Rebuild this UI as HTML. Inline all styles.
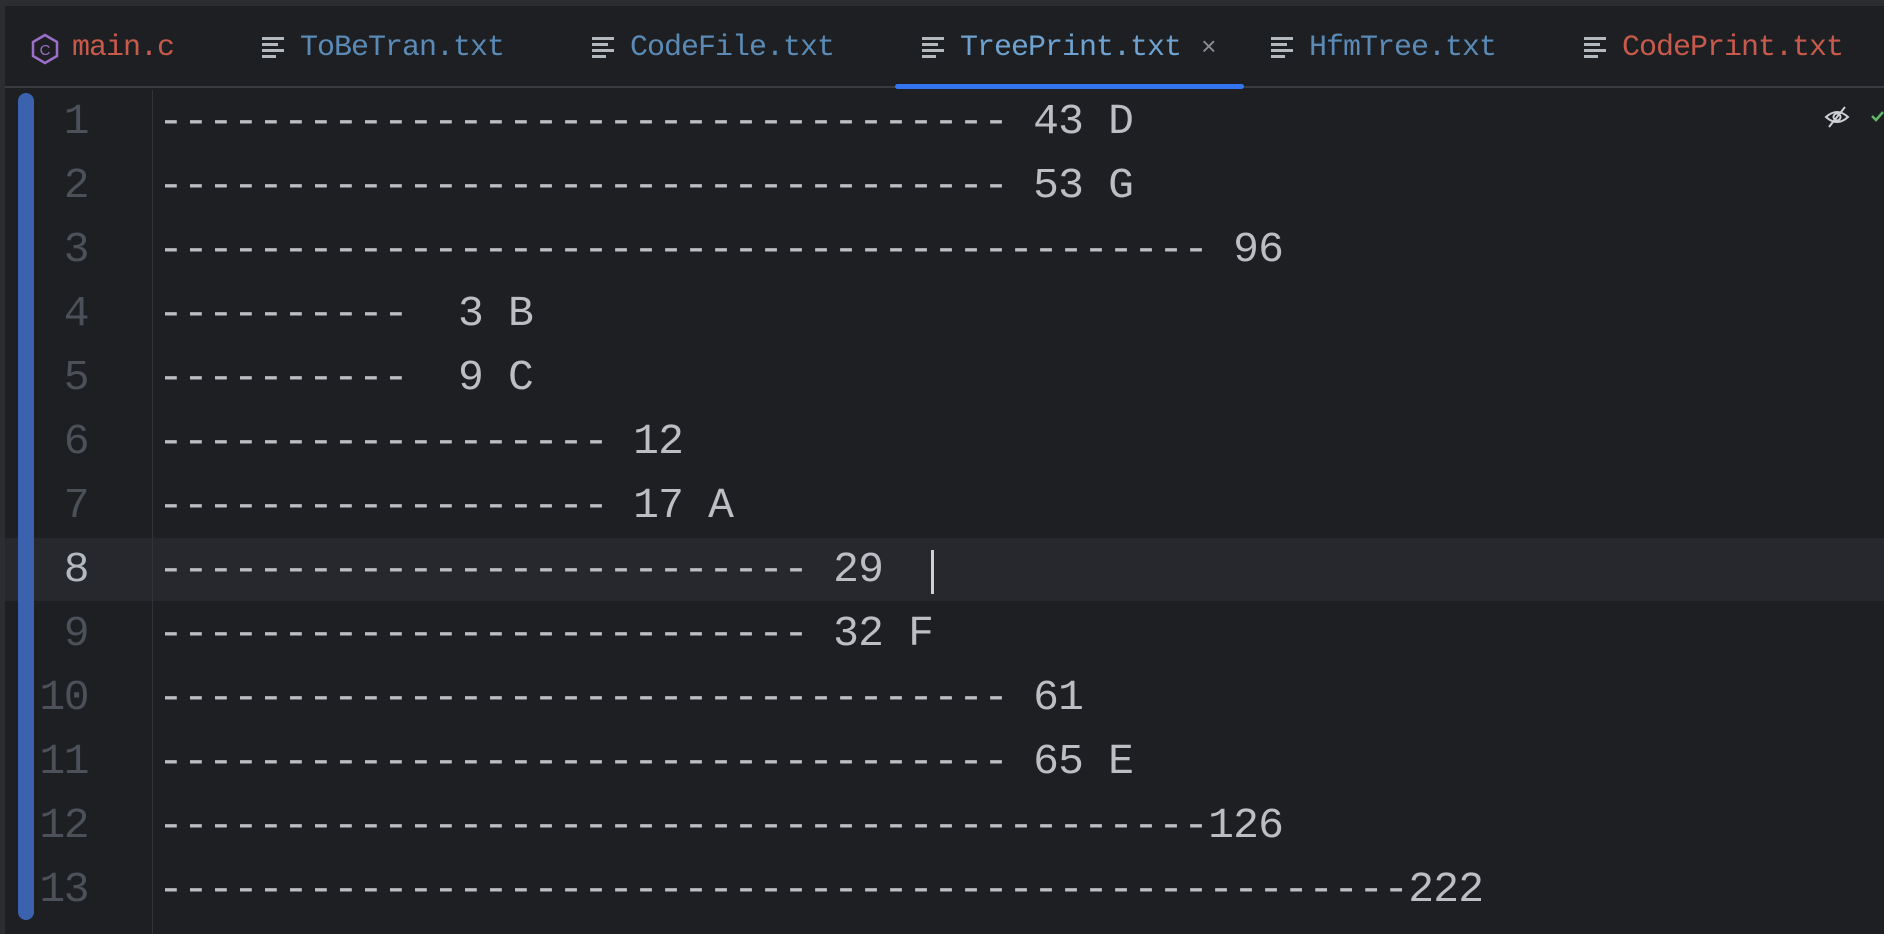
<!DOCTYPE html>
<html><head><meta charset="utf-8"><style>
*{margin:0;padding:0;box-sizing:border-box}
body{width:1884px;height:934px;background:#1e1f22;position:relative;overflow:hidden;font-family:"Liberation Mono",monospace}
.top{position:absolute;left:0;top:0;width:1884px;height:6px;background:#2b2d30}
.leftedge{position:absolute;left:0;top:6px;width:5px;height:928px;background:#2b2d30}
.tabbar{position:absolute;left:5px;top:6px;width:1879px;height:82px;background:#1e1f22;border-bottom:2px solid #393b40}
.tab{position:absolute;top:30px;font-size:30px;letter-spacing:-1px;line-height:36px;white-space:nowrap}
.ic{position:absolute;top:37px;width:24px;height:22px}
.ic i{position:absolute;left:0;height:3px;background:#b4b8bf}
.ul{position:absolute;left:895px;top:84px;width:349px;height:5px;background:#3574f0;border-radius:3px}
.hl{position:absolute;left:5px;top:538px;width:1879px;height:63px;background:#26282e}
.bar{position:absolute;left:18px;top:93px;width:16px;height:827px;background:#3a62ae;border-radius:8px}
.div{position:absolute;left:152px;top:90px;width:1px;height:844px;background:#313338}
.ln{position:absolute;left:30px;width:58px;text-align:right;font-size:43px;letter-spacing:-1.5px;color:#4b5059;line-height:64px}
.tx{position:absolute;left:158px;font-size:43px;letter-spacing:-0.8px;color:#bcbec4;line-height:64px;white-space:pre}
.cur{position:absolute;left:931px;top:550px;width:3px;height:44px;background:#ced0d6}
</style></head><body>
<div class="top"></div><div class="leftedge"></div>
<div class="tabbar"></div>
<svg style="position:absolute;left:30px;top:33px" width="30" height="32" viewBox="0 0 30 32"><polygon points="15,2 27,9 27,23 15,30 3,23 3,9" fill="none" stroke="#9b6fc8" stroke-width="2.5"/><text x="15" y="22" font-size="15" text-anchor="middle" fill="#9b6fc8" font-family="Liberation Sans">C</text></svg>
<div class="tab" style="left:72px;color:#c75a4b">main.c</div>
<div class="ic" style="left:262px"><i style="top:0;width:22px"></i><i style="top:6px;width:16px"></i><i style="top:12px;width:22px"></i><i style="top:18px;width:14px"></i></div>
<div class="tab" style="left:300px;color:#5a8ab5">ToBeTran.txt</div>
<div class="ic" style="left:592px"><i style="top:0;width:22px"></i><i style="top:6px;width:16px"></i><i style="top:12px;width:22px"></i><i style="top:18px;width:14px"></i></div>
<div class="tab" style="left:630px;color:#5a8ab5">CodeFile.txt</div>
<div class="ic" style="left:922px"><i style="top:0;width:22px"></i><i style="top:6px;width:16px"></i><i style="top:12px;width:22px"></i><i style="top:18px;width:14px"></i></div>
<div class="tab" style="left:960px;color:#6ea2d0">TreePrint.txt</div>
<div class="tab" style="left:1201px;color:#8a8d93;font-size:26px">×</div>
<div class="ic" style="left:1271px"><i style="top:0;width:22px"></i><i style="top:6px;width:16px"></i><i style="top:12px;width:22px"></i><i style="top:18px;width:14px"></i></div>
<div class="tab" style="left:1309px;color:#5a8ab5">HfmTree.txt</div>
<div class="ic" style="left:1584px"><i style="top:0;width:22px"></i><i style="top:6px;width:16px"></i><i style="top:12px;width:22px"></i><i style="top:18px;width:14px"></i></div>
<div class="tab" style="left:1622px;color:#c75a4b">CodePrint.txt</div>
<div class="ul"></div>
<div class="hl"></div>
<div class="bar"></div>
<div class="div"></div>
<div class="ln" style="top:90px">1</div>
<div class="ln" style="top:154px">2</div>
<div class="ln" style="top:218px">3</div>
<div class="ln" style="top:282px">4</div>
<div class="ln" style="top:346px">5</div>
<div class="ln" style="top:410px">6</div>
<div class="ln" style="top:474px">7</div>
<div class="ln" style="top:538px;color:#b4b8bf">8</div>
<div class="ln" style="top:602px">9</div>
<div class="ln" style="top:666px">10</div>
<div class="ln" style="top:730px">11</div>
<div class="ln" style="top:794px">12</div>
<div class="ln" style="top:858px">13</div>
<div class="tx" style="top:90px">---------------------------------- 43 D</div>
<div class="tx" style="top:154px">---------------------------------- 53 G</div>
<div class="tx" style="top:218px">------------------------------------------ 96</div>
<div class="tx" style="top:282px">----------  3 B</div>
<div class="tx" style="top:346px">----------  9 C</div>
<div class="tx" style="top:410px">------------------ 12</div>
<div class="tx" style="top:474px">------------------ 17 A</div>
<div class="tx" style="top:538px">-------------------------- 29</div>
<div class="tx" style="top:602px">-------------------------- 32 F</div>
<div class="tx" style="top:666px">---------------------------------- 61</div>
<div class="tx" style="top:730px">---------------------------------- 65 E</div>
<div class="tx" style="top:794px">------------------------------------------126</div>
<div class="tx" style="top:858px">--------------------------------------------------222</div>
<div class="cur"></div>
<svg style="position:absolute;left:1823px;top:104px" width="28" height="26" viewBox="0 0 28 26"><path d="M3 13 Q14 3 25 13 Q14 23 3 13Z" fill="none" stroke="#ced0d6" stroke-width="2"/><circle cx="14" cy="13" r="3.5" fill="none" stroke="#ced0d6" stroke-width="2"/><line x1="6" y1="23" x2="22" y2="3" stroke="#ced0d6" stroke-width="2"/></svg>
<svg style="position:absolute;left:1870px;top:110px" width="14" height="14" viewBox="0 0 14 14"><path d="M2 6 L6 10 L13 2" fill="none" stroke="#5fb865" stroke-width="2.5"/></svg>
</body></html>
